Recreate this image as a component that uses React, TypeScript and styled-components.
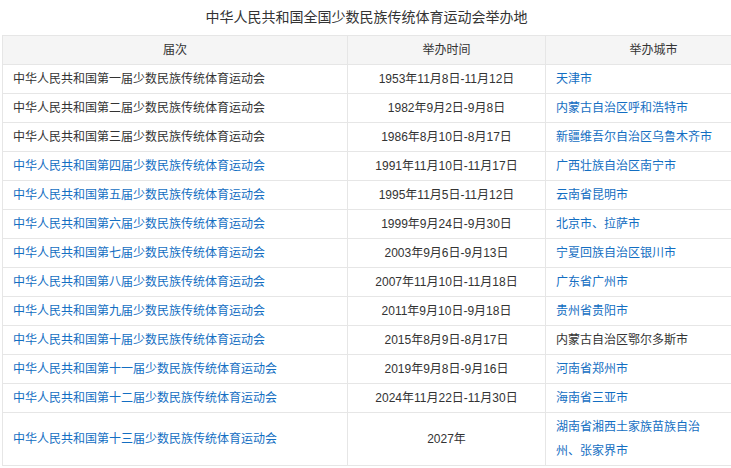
import React from 'react';
import styled, { createGlobalStyle } from 'styled-components';

// Données du tableau
interface Edition {
  name: string;
  date: string;
  city: string;
  nameLink?: boolean;
  cityLink?: boolean;
}

const editions: Edition[] = [
  { name: '中华人民共和国第一届少数民族传统体育运动会', date: '1953年11月8日-11月12日', city: '天津市', cityLink: true },
  { name: '中华人民共和国第二届少数民族传统体育运动会', date: '1982年9月2日-9月8日', city: '内蒙古自治区呼和浩特市', cityLink: true },
  { name: '中华人民共和国第三届少数民族传统体育运动会', date: '1986年8月10日-8月17日', city: '新疆维吾尔自治区乌鲁木齐市', cityLink: true },
  { name: '中华人民共和国第四届少数民族传统体育运动会', date: '1991年11月10日-11月17日', city: '广西壮族自治区南宁市', nameLink: true, cityLink: true },
  { name: '中华人民共和国第五届少数民族传统体育运动会', date: '1995年11月5日-11月12日', city: '云南省昆明市', nameLink: true, cityLink: true },
  { name: '中华人民共和国第六届少数民族传统体育运动会', date: '1999年9月24日-9月30日', city: '北京市、拉萨市', nameLink: true, cityLink: true },
  { name: '中华人民共和国第七届少数民族传统体育运动会', date: '2003年9月6日-9月13日', city: '宁夏回族自治区银川市', nameLink: true, cityLink: true },
  { name: '中华人民共和国第八届少数民族传统体育运动会', date: '2007年11月10日-11月18日', city: '广东省广州市', nameLink: true, cityLink: true },
  { name: '中华人民共和国第九届少数民族传统体育运动会', date: '2011年9月10日-9月18日', city: '贵州省贵阳市', nameLink: true, cityLink: true },
  { name: '中华人民共和国第十届少数民族传统体育运动会', date: '2015年8月9日-8月17日', city: '内蒙古自治区鄂尔多斯市', nameLink: true },
  { name: '中华人民共和国第十一届少数民族传统体育运动会', date: '2019年9月8日-9月16日', city: '河南省郑州市', nameLink: true, cityLink: true },
  { name: '中华人民共和国第十二届少数民族传统体育运动会', date: '2024年11月22日-11月30日', city: '海南省三亚市', nameLink: true, cityLink: true },
  { name: '中华人民共和国第十三届少数民族传统体育运动会', date: '2027年', city: '湖南省湘西土家族苗族自治州、张家界市', nameLink: true, cityLink: true },
];

export default function App() {
  return (
    <>
      <GlobalStyle />
      <Page>
        <Title>中华人民共和国全国少数民族传统体育运动会举办地</Title>
        <Table>
          <colgroup>
            <col style={{ width: 345 }} />
            <col style={{ width: 198 }} />
            <col />
          </colgroup>
          <thead>
            <tr>
              <HeaderCell>届次</HeaderCell>
              <HeaderCell>举办时间</HeaderCell>
              <HeaderCell>举办城市</HeaderCell>
            </tr>
          </thead>
          <tbody>
            {editions.map((e) => (
              <tr key={e.name}>
                <Cell>
                  <CellText link={e.nameLink}>{e.name}</CellText>
                </Cell>
                <Cell align="center">
                  <CellText>{e.date}</CellText>
                </Cell>
                <Cell>
                  <CityText link={e.cityLink}>{e.city}</CityText>
                </Cell>
              </tr>
            ))}
          </tbody>
        </Table>
      </Page>
    </>
  );
}

// Styled Components
const GlobalStyle = createGlobalStyle`
  html, body {
    margin: 0;
    padding: 0;
    background: #fff;
    overflow: hidden;
  }
  body {
    font-family: 'Liberation Sans', 'Noto Sans CJK SC', sans-serif;
    color: #333;
  }
`;

const Page = styled.div`
  width: 731px;
  padding: 0 0 0 2px;
  box-sizing: border-box;
`;

const Title = styled.div`
  width: 729px;
  height: 35px;
  line-height: 35px;
  text-align: center;
  font-size: 14px;
  color: #333;
`;

const Table = styled.table`
  width: 760px;
  table-layout: fixed;
  border-collapse: collapse;
  border: 1px solid #e6e6e6;
  font-size: 12px;
`;

const HeaderCell = styled.th`
  height: 28px;
  padding: 2px 10px;
  box-sizing: border-box;
  background: #f5f5f5;
  border: 1px solid #e6e6e6;
  font-weight: normal;
  line-height: 24px;
  text-align: center;
  color: #333;
`;

const Cell = styled.td<{ align?: 'left' | 'center' }>`
  padding: 2px 10px;
  border: 1px solid #e6e6e6;
  line-height: 24px;
  text-align: ${(p) => p.align || 'left'};
  vertical-align: middle;
`;

const CellText = styled.span<{ link?: boolean }>`
  color: ${(p) => (p.link ? '#136ec2' : '#333')};
`;

const CityText = styled.span<{ link?: boolean }>`
  display: block;
  max-width: 160px;
  color: ${(p) => (p.link ? '#136ec2' : '#333')};
`;
